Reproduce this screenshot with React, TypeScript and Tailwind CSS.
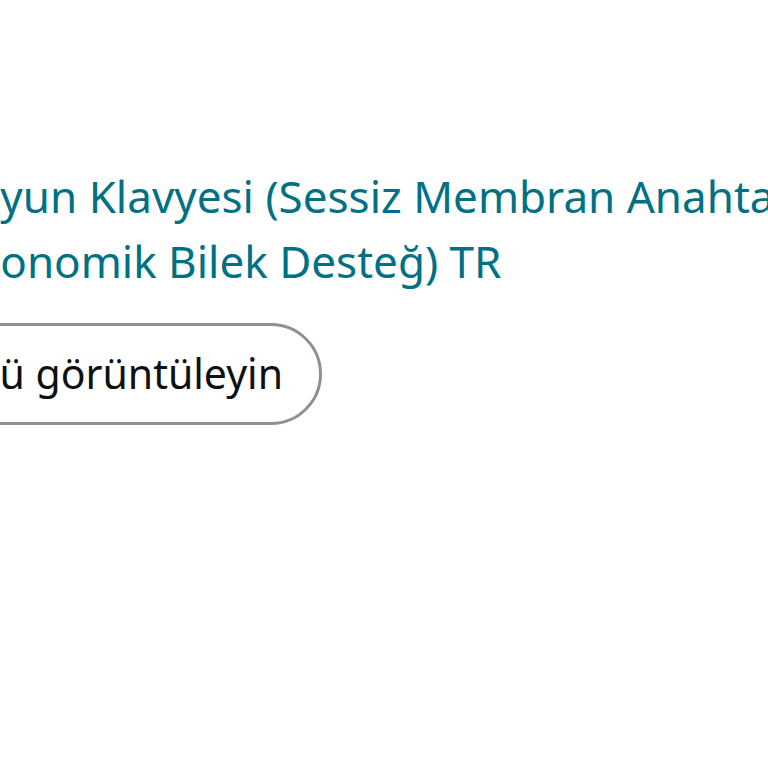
export default function App() {
  return (
    <div className="w-[768px] h-[768px] bg-white overflow-hidden relative" style={{ fontFamily: '"Noto Sans", "Open Sans", sans-serif' }}>
      <div className="pt-[164px]">
        <div className="text-[44px] leading-[65px] text-[#007185] whitespace-nowrap">
          <div className="ml-[-34px]">Oyun Klavyesi (Sessiz Membran Anahtarlar</div>
          <div className="ml-[-69px]">Ergonomik Bilek Desteğ) TR</div>
        </div>
        <div className="mt-[29px] w-[322px] flex justify-end">
          <div className="shrink-0 h-[102px] rounded-full border-[3px] border-[#8d9096] flex items-center pl-[40px] pr-[36px] text-[41px] text-[#0f1111] whitespace-nowrap">
            Ürünü görüntüleyin
          </div>
        </div>
      </div>
    </div>
  );
}
